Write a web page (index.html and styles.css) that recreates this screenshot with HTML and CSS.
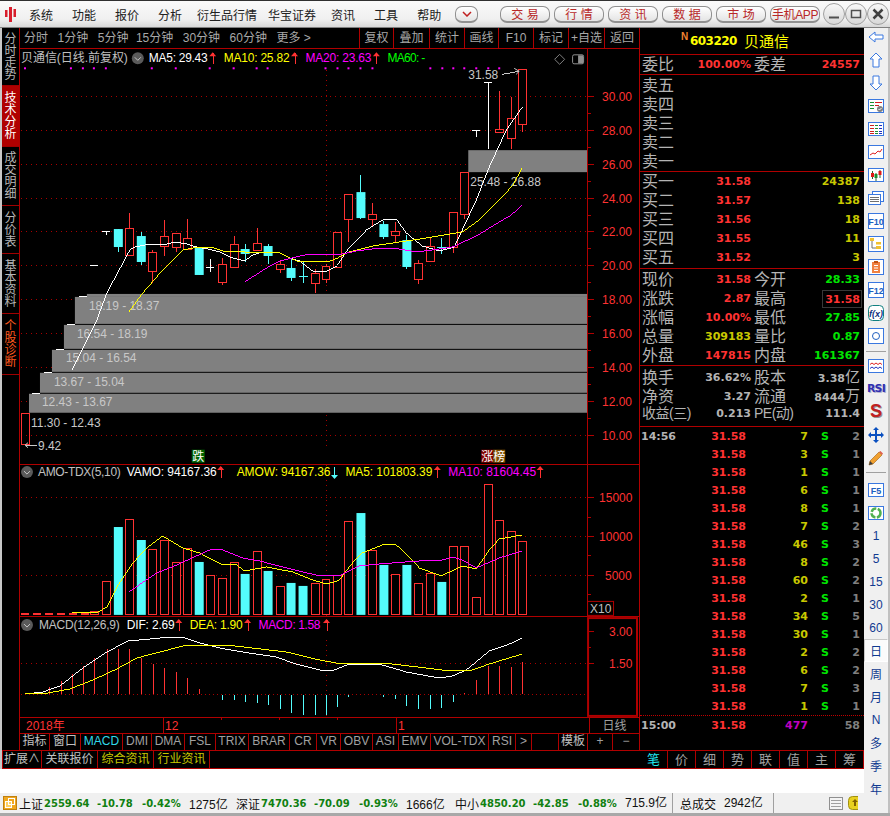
FILE: index.html
```html
<!DOCTYPE html>
<html lang="zh">
<head>
    <meta charset="UTF-8">
    <title>贝通信 - 行情</title>
    <link rel="stylesheet" href="styles.css">
</head>
<body>
<div class="app">
    <header class="menubar">
        <svg class="logo" width="13" height="17" viewBox="0 0 13 17"><path d="M1 4h2.500v7H1zM5 1h3v15H5zM9.500 3H12v8H9.500z" fill="#d81e2c"/></svg>
        <nav class="menu">
            <span>系统</span><span>功能</span><span>报价</span><span>分析</span>
            <span class="menu-long">衍生品行情</span><span class="menu-long">华宝证券</span>
            <span>资讯</span><span>工具</span><span>帮助</span>
        </nav>
        <div class="top-btns">
            <button class="pill pill-small"><svg width="10" height="6" viewBox="0 0 10 6"><path d="M1 1l4 4 4-4" fill="none" stroke="#c02020" stroke-width="1.500"/></svg></button>
            <button class="pill pill-first">交 易</button>
            <button class="pill">行 情</button>
            <button class="pill">资 讯</button>
            <button class="pill">数 据</button>
            <button class="pill">市 场</button>
            <button class="pill pill-app">手机APP</button>
        </div>
        <div class="win-btns">
            <span class="win-btn"><svg width="12" height="12" viewBox="0 0 12 12"><path d="M1 9.500h10" stroke="#505050" stroke-width="2"/></svg></span>
            <span class="win-btn"><svg width="12" height="12" viewBox="0 0 12 12"><rect x="1.500" y="2.500" width="9" height="7" fill="none" stroke="#505050" stroke-width="1.500"/></svg></span>
            <span class="win-btn"><svg width="12" height="12" viewBox="0 0 12 12"><path d="M1.500 1.500l9 9M10.500 1.500l-9 9" stroke="#404040" stroke-width="2.500"/></svg></span>
        </div>
    </header>

    <div class="main">
        <div class="work">
            <div class="upper">
                <div class="left">
                    <div class="left-top">
                        <nav class="side">
                            <a class="side-item side-h58">分时走势</a>
                            <a class="side-item side-h61 side-active">技术分析</a>
                            <a class="side-item side-h59">成交明细</a>
                            <a class="side-item side-h48">分价表</a>
                            <a class="side-item side-h60">基本资料</a>
                            <a class="side-item side-h61 side-alert">个股诊断</a>
                        </nav>
                        <div class="center">
                            <div class="period-bar">
                                <div class="periods">
                                    <span>分时</span><span>1分钟</span><span>5分钟</span><span class="period-tight">15分钟</span><span>30分钟</span><span>60分钟</span><span>更多 &gt;</span>
                                </div>
                                <div class="period-tools">
                                    <span>复权</span><span>叠加</span><span>统计</span><span>画线</span><span>F10</span><span>标记</span><span>+自选</span><span>返回</span>
                                </div>
                            </div>
                            <svg id="kline" class="pane pane-kline" viewBox="20 49 620 416"></svg>
                            <svg id="vol" class="pane pane-vol" viewBox="20 465 620 152"></svg>
                            <svg id="macd" class="pane pane-macd" viewBox="20 617 620 100"></svg>
                            <div class="date-row">
                                <span class="date-year">2018年</span>
                                <span class="date-dec">12</span>
                                <span>1</span>
                                <span class="date-unit">日线</span>
                            </div>
                            <div class="index-tabs">
                                <span class="tab-gray">指标</span><span class="tab-gray">窗口</span><span class="tab-on">MACD</span><span>DMI</span><span>DMA</span><span>FSL</span><span>TRIX</span><span>BRAR</span><span>CR</span><span>VR</span><span>OBV</span><span>ASI</span><span>EMV</span><span>VOL-TDX</span><span>RSI</span><span>&gt;</span><span></span><span class="tab-gray">模板</span><span>+</span><span>−</span>
                            </div>
                        </div>
                    </div>
                    <div class="info-tabs">
                        <span class="info-w39">扩展∧</span><span class="info-w56">关联报价</span><span class="info-w56 info-on">综合资讯</span><span class="info-w56 info-on">行业资讯</span>
                    </div>
                </div>

                <aside class="quote">
                    <div class="q-head">
                        <sup class="q-n">N</sup><b class="q-code">603220</b><span class="q-name">贝通信</span>
                    </div>
                    <div class="q-block q-rate">
                        <div class="q-row q-4"><span>委比</span><b class="red">100.00%</b><span>委差</span><b class="red">24557</b></div>
                    </div>
                    <div class="q-block q-pad-top">
                        <div class="q-row q-3"><span>卖五</span></div>
                        <div class="q-row q-3"><span>卖四</span></div>
                        <div class="q-row q-3"><span>卖三</span></div>
                        <div class="q-row q-3"><span>卖二</span></div>
                        <div class="q-row q-3"><span>卖一</span></div>
                    </div>
                    <div class="q-block q-pad-bottom">
                        <div class="q-row q-3"><span>买一</span><b class="red">31.58</b><b class="olive">24387</b></div>
                        <div class="q-row q-3"><span>买二</span><b class="red">31.57</b><b class="olive">138</b></div>
                        <div class="q-row q-3"><span>买三</span><b class="red">31.56</b><b class="olive">18</b></div>
                        <div class="q-row q-3"><span>买四</span><b class="red">31.55</b><b class="olive">11</b></div>
                        <div class="q-row q-3"><span>买五</span><b class="red">31.52</b><b class="olive">3</b></div>
                    </div>
                    <div class="q-block q-pad-top">
                        <div class="q-row q-4"><span>现价</span><b class="red">31.58</b><span>今开</span><b class="green">28.33</b></div>
                        <div class="q-row q-4"><span>涨跌</span><b class="red">2.87</b><span>最高</span><b class="red q-boxed">31.58</b></div>
                        <div class="q-row q-4"><span>涨幅</span><b class="red">10.00%</b><span>最低</span><b class="green">27.85</b></div>
                        <div class="q-row q-4"><span>总量</span><b class="olive">309183</b><span>量比</span><b class="green">0.87</b></div>
                        <div class="q-row q-4"><span>外盘</span><b class="red">147815</b><span>内盘</span><b class="green">161367</b></div>
                    </div>
                    <div class="q-block q-pad-bottom3">
                        <div class="q-row q-4"><span>换手</span><b class="gray">36.62%</b><span>股本</span><b class="gray">3.38<i>亿</i></b></div>
                        <div class="q-row q-4"><span>净资</span><b class="gray">3.27</b><span>流通</span><b class="gray">8444<i>万</i></b></div>
                        <div class="q-row q-4"><span class="q-wide">收益(三)</span><b class="gray">0.213</b><span class="q-wide">PE(动)</span><b class="gray">111.4</b></div>
                    </div>
                    <div id="ticks" class="ticks"></div>
                    <div class="tick-last">
                        <b class="gray">15:00</b><b class="red">31.58</b><b class="purple">477</b><span></span><b class="dim">58</b>
                    </div>
                    <div class="q-tabs">
                        <span class="q-tab-on">笔</span><span>价</span><span>细</span><span>势</span><span>联</span><span>值</span><span>主</span><span>筹</span>
                    </div>
                </aside>
            </div>
            <div class="blank"></div>
            <footer class="status">
                <svg class="status-icon" width="14" height="14" viewBox="0 0 14 14"><rect x=".5" y=".5" width="13" height="13" fill="#f0a820" stroke="#c08010"/><rect x="2.500" y="5.500" width="6" height="6" fill="#ffd060" stroke="#fff"/><rect x="5.500" y="2.500" width="6" height="6" fill="none" stroke="#fff"/></svg>
                <span class="idx-name">上证</span><b class="idx-val">2559.64</b><b class="idx-chg">-10.78</b><b class="idx-pct">-0.42%</b><span class="idx-amt">1275亿</span>
                <span class="idx-name">深证</span><b class="idx-val">7470.36</b><b class="idx-chg">-70.09</b><b class="idx-pct">-0.93%</b><span class="idx-amt idx-amt-wide">1666亿</span>
                <span class="idx-name">中小</span><b class="idx-val">4850.20</b><b class="idx-chg">-42.85</b><b class="idx-pct">-0.88%</b><span class="idx-amt idx-amt-last">715.9亿</span>
                <span class="total-name">总成交</span><span class="total-val">2942亿</span>
                <svg class="status-list" width="14" height="13" viewBox="0 0 14 13"><rect x=".5" y=".5" width="13" height="12" fill="#f4f4f4" stroke="#909090"/><path d="M2 3.500h10M2 6.500h10M2 9.500h10" stroke="#a0a0a0"/></svg>
                <svg class="status-coin" width="10" height="14" viewBox="0 0 10 14"><rect x=".5" y=".5" width="14" height="13" rx="4" fill="#e8d020" stroke="#a09010"/><path d="M7 3l3 3H8v4H6V6H4z" fill="#806000"/></svg>
            </footer>
        </div>

        <aside class="toolbar">
            <span class="tool"><svg viewBox="0 0 16 16"><path d="M1 8l6-5v3h8v4H7v3z" fill="#fff" stroke="#3a78e0"/></svg></span>
            <span class="tool"><svg viewBox="0 0 16 16"><path d="M8 1l6 6h-3v8H5V7H2z" fill="#fff" stroke="#3a78e0"/></svg></span>
            <span class="tool"><svg viewBox="0 0 16 16"><path d="M8 15l6-6h-3V1H5v8H2z" fill="#fff" stroke="#3a78e0"/></svg></span>
            <span class="tool"><svg viewBox="0 0 16 16"><rect x=".5" y="1.500" width="15" height="13" fill="#fff" stroke="#3a78e0"/><path d="M2 4.500h4M2 7.500h4M2 10.500h4" stroke="#1a9030"/><path d="M7 4.500h7M7 7.500h4" stroke="#d02020"/><circle cx="12" cy="11" r="3" fill="#808080"/><path d="M10.500 11l1 1 2-2" stroke="#fff" fill="none"/></svg></span>
            <span class="tool"><svg viewBox="0 0 16 16"><rect x=".5" y="1.500" width="15" height="13" fill="#fff" stroke="#3a78e0"/><path d="M2 4.500h4M2 7.500h4M2 10.500h4M2 12.500h4" stroke="#d02020"/><path d="M7 4.500h3M7 7.500h3M7 10.500h3M7 12.500h3" stroke="#1a9030"/><path d="M11 4.500h3M11 7.500h3M11 10.500h3M11 12.500h3" stroke="#2030c0"/></svg></span>
            <span class="tool"><svg viewBox="0 0 16 16"><rect x=".5" y="1.500" width="15" height="13" fill="#fff" stroke="#3a78e0"/><path d="M2 11l3-2 2 1 3-3 2 1 2-3" fill="none" stroke="#e02020"/></svg></span>
            <span class="tool"><svg viewBox="0 0 16 16"><rect x=".5" y="1.500" width="15" height="13" fill="#fff" stroke="#3a78e0"/><path d="M4.500 4v8M8 6v8M12 3v8" stroke="#306030"/><path d="M3 6h3v4H3zM10.500 4h3v4h-3z" fill="#e01818"/><path d="M6.500 7h3v4h-3z" fill="#1a9030"/></svg></span>
            <span class="tool"><svg viewBox="0 0 16 16"><rect x="4.500" y="1.500" width="11" height="10" fill="#fff" stroke="#3a78e0"/><rect x=".5" y="4.500" width="12" height="10" fill="#fff" stroke="#3a78e0"/><path d="M2 7.500h9M2 9.500h9M2 11.500h9" stroke="#707070"/></svg></span>
            <span class="tool"><svg viewBox="0 0 16 16"><rect x=".5" y=".5" width="15" height="15" fill="#fff" stroke="#3a78e0"/><text class="tool-text" x="8" y="12" text-anchor="middle">F10</text></svg></span>
            <span class="tool"><svg viewBox="0 0 16 16"><rect x=".5" y=".5" width="15" height="15" fill="#fff" stroke="#3a78e0"/><path d="M4 4v8h4" fill="none" stroke="#707070"/><path d="M2 2h4v3H2zM8 6h5v2.500H8zM8 10h5v3H8z" fill="#f0c030"/></svg></span>
            <span class="tool"><svg viewBox="0 0 16 16"><rect x=".5" y=".5" width="15" height="15" fill="#fff" stroke="#3a78e0"/><path d="M4 3h8v11H4z" fill="#f08040"/><path d="M6 2h4v2H6z" fill="#c05010"/><path d="M6 6.500h4M6 9h4M6 11.500h4" stroke="#fff"/></svg></span>
            <span class="tool"><svg viewBox="0 0 16 16"><rect x=".5" y=".5" width="15" height="15" fill="#fff" stroke="#3a78e0"/><text class="tool-text" x="8" y="12" text-anchor="middle">F12</text></svg></span>
            <span class="tool"><svg viewBox="0 0 16 16"><rect x=".5" y=".5" width="15" height="15" rx="4" fill="#fff" stroke="#108080"/><text class="tool-text tool-fx" x="8" y="12" text-anchor="middle">f(x)</text></svg></span>
            <span class="tool"><svg viewBox="0 0 16 16"><rect x=".5" y=".5" width="15" height="15" fill="#fff" stroke="#3a78e0"/><circle cx="8" cy="8" r="3.500" fill="none" stroke="#2060c0"/></svg></span>
            <span class="tool-sep tool-sep-a"></span>
            <span class="tool"><svg viewBox="0 0 16 16"><rect x=".5" y="1.500" width="15" height="13" fill="#fff" stroke="#3a78e0"/><path d="M2 6.500l2-1.500 2 1.500 2-1.500 2 1.500 2-1.500 2 1.500" fill="none" stroke="#e02020"/><path d="M2 10.500l2-1.500 2 1.500 2-1.500 2 1.500 2-1.500 2 1.500" fill="none" stroke="#2030c0"/></svg></span>
            <span class="tool tool-rsi">RSI</span>
            <span class="tool tool-s">S</span>
            <span class="tool"><svg viewBox="0 0 16 16"><path d="M8 0l3 3H9v4h4V5l3 3-3 3V9H9v4h2l-3 3-3-3h2V9H3v2L0 8l3-3v2h4V3H5z" fill="#0a50c0"/></svg></span>
            <span class="tool"><svg viewBox="0 0 16 16"><path d="M2 11L11 2l3 3-9 9-4 1z" fill="#f0a030" stroke="#a06010" stroke-width=".6"/><path d="M11 2l3 3 1-1.500L12.500 1z" fill="#e06050"/><path d="M1 15l1-4 3 3z" fill="#404040"/></svg></span>
            <span class="tool-sep tool-sep-b"></span>
            <span class="tool"><svg viewBox="0 0 16 16"><rect x=".5" y="1.500" width="15" height="13" fill="#fff" stroke="#3a78e0"/><text class="tool-text" x="8" y="12" text-anchor="middle">F5</text></svg></span>
            <span class="tool"><svg viewBox="0 0 16 16"><rect x=".5" y="1.500" width="15" height="13" fill="#fff" stroke="#3a78e0"/><circle cx="8" cy="8" r="4.500" fill="none" stroke="#50b050" stroke-width="2.500" stroke-dasharray="6 1.500"/></svg></span>
            <span class="tool tool-num">1</span>
            <span class="tool tool-num">5</span>
            <span class="tool tool-num">15</span>
            <span class="tool tool-num">30</span>
            <span class="tool tool-num">60</span>
            <span class="tool tool-num tool-now">日</span>
            <span class="tool tool-num">周</span>
            <span class="tool tool-num">月</span>
            <span class="tool tool-num">N</span>
            <span class="tool tool-num">多</span>
            <span class="tool tool-num">季</span>
            <span class="tool tool-num">年</span>
        </aside>
    </div>
</div>
<script src="chart.js"></script>
</body>
</html>
```

FILE: styles.css
```css
* {
    box-sizing: border-box;
}
body {
    margin: 0;
    background: #000;
    font-family: "Liberation Sans", "Noto Sans CJK SC", sans-serif;
    font-size: 12px;
    color: #c0c0c0;
}
.app {
    width: 890px;
    height: 816px;
    overflow: hidden;
    background: #a8a8a8;
}
b, i {
    font-style: normal;
}

/* top menu */
.menubar {
    height: 28px;
    display: flex;
    align-items: center;
    border-top: 1px solid #303030;
    border-bottom: 1px solid #808080;
    background: linear-gradient(#fafafa, #f0f0f0 70%, #d8d8d8);
    color: #202020;
}
.logo {
    margin-left: 4px;
    flex: none;
}
.menu {
    display: flex;
    gap: 19px;
    margin-left: 12px;
    width: 426px;
    font-size: 12px;
}
.menu-long {
    margin: 0 -4px;
}
.top-btns {
    display: flex;
    gap: 4px;
}
.pill {
    width: 50px;
    height: 17px;
    padding: 0;
    display: flex;
    align-items: center;
    justify-content: center;
    border: 1px solid #909090;
    border-bottom-width: 2px;
    border-radius: 7px;
    background: linear-gradient(#ffffff, #e4e4e4);
    color: #b82828;
    font: 12px "Liberation Sans", "Noto Sans CJK SC", sans-serif;
}
.pill-small {
    width: 23px;
}
.pill-first {
    margin-left: 18px;
}
.pill-app {
    letter-spacing: -.4px;
}
.win-btns {
    display: flex;
    margin-left: 3px;
}
.win-btn {
    width: 22px;
    height: 22px;
    display: flex;
    align-items: center;
    justify-content: center;
    border: 1px solid #a0a0a0;
    border-radius: 50%;
    background: linear-gradient(#f8f8f8, #d8d8d8);
}

/* layout */
.main {
    display: flex;
    height: 785px;
}
.work {
    width: 864px;
    flex: none;
}
.upper {
    display: flex;
    height: 741px;
    padding-left: 2px;
    background: #c8c8c8;
}
.left {
    width: 638px;
    display: flex;
    flex-direction: column;
    background: #000;
}
.left-top {
    display: flex;
    height: 722px;
}
.blank {
    height: 24px;
    background: #fff;
}

/* left strip */
.side {
    width: 18px;
    background: #000;
    border-right: 1px solid #b00000;
    font-size: 12px;
    line-height: 12px;
}
.side-item {
    display: flex;
    align-items: center;
    justify-content: center;
    padding: 0 3px;
    border-bottom: 1px solid #a00000;
    color: #b8b8b8;
    text-align: center;
}
.side-h48 { height: 48px; }
.side-h58 { height: 58px; }
.side-h59 { height: 59px; }
.side-h60 { height: 60px; }
.side-h61 { height: 61px; }
.side-active {
    background: #b00000;
    color: #fff;
}
.side-alert {
    color: #ff5a1e;
}

/* centre */
.center {
    width: 620px;
    border-right: 1px solid #b00000;
}
.period-bar {
    height: 21px;
    display: flex;
    justify-content: space-between;
    border-bottom: 1px solid #b00000;
}
.periods {
    display: flex;
    gap: 9.500px;
    padding-left: 4px;
    line-height: 20px;
    color: #a8a8a8;
}
.period-tight {
    margin-left: -2px;
}
.period-tools {
    display: grid;
    grid-template-columns: 34px 36px 35px 34px 35px 35px 36px 35px;
    line-height: 20px;
    text-align: center;
    color: #a8a8a8;
}
.period-tools span {
    border-left: 1px solid #b00000;
}
.pane {
    display: block;
    width: 619px;
    border: 0;
}
.pane-kline { height: 416px; }
.pane-vol { height: 152px; }
.pane-macd { height: 100px; }
.pane text {
    font-family: "Liberation Sans", "Noto Sans CJK SC", sans-serif;
    font-size: 12px;
}
.date-row {
    height: 17px;
    display: grid;
    grid-template-columns: 143px 233px 193px 1fr;
    border-top: 1px solid #b00000;
    border-bottom: 1px solid #b00000;
    color: #ff3232;
    line-height: 16px;
}
.date-row span {
    padding-left: 1px;
    border-left: 1px solid #b00000;
}
.date-row .date-year {
    padding-left: 6px;
    border-left: 0;
}
.date-row .date-dec {
    /* month ticks under the macd pane */
    background:
        linear-gradient(#b00000, #b00000) 57px 0 / 1px 2px no-repeat,
        linear-gradient(#b00000, #b00000) 115px 0 / 1px 2px no-repeat,
        linear-gradient(#b00000, #b00000) 173px 0 / 1px 2px no-repeat;
}
.date-row .date-unit {
    padding-left: 0;
    color: #a0a0a0;
    font-size: 12px;
    text-align: center;
}
.index-tabs {
    height: 16px;
    display: grid;
    grid-template-columns: 30px 31px 42px 29px 33px 31px 33px 41px 27px 24px 32px 26px 32px 58px 27px 16px 27px 29px 25px 1fr;
    line-height: 15px;
    text-align: center;
    color: #a0a0a0;
}
.index-tabs span {
    border-right: 1px solid #b00000;
}
.index-tabs span:last-child {
    border-right: 0;
}
.index-tabs .tab-gray {
    color: #c0c0c0;
}
.index-tabs .tab-on {
    color: #30d8e8;
}
.info-tabs {
    height: 19px;
    display: flex;
    background: #000;
    border-top: 1px solid #b00000;
    border-bottom: 1px solid #b00000;
    line-height: 16px;
    text-align: center;
}
.info-tabs span {
    border-right: 1px solid #b00000;
}
.info-w39 { width: 40px; border-left: 1px solid #b00000; }
.info-w56 { width: 56px; }
.info-tabs .info-on {
    color: #c8c800;
}

/* quote panel */
.quote {
    width: 224px;
    background: #000;
    font-size: 16px;
    color: #b4b4b4;
}
.quote b {
    font-family: "DejaVu Sans", sans-serif;
    font-size: 11px;
    font-weight: bold;
    text-align: right;
}
.red { color: #ff3232; }
.olive { color: #c8c800; }
.green { color: #00e600; }
.gray { color: #b4b4b4; }
.purple { color: #c000c0; }
.dim { color: #808080; }
.q-head {
    height: 27px;
    padding-left: 41px;
    border-bottom: 1px solid #b00000;
    display: flex;
    align-items: center;
    line-height: 1;
}
.q-n {
    width: 9px;
    margin-top: -9px;
    color: #f08030;
    font-size: 10px;
    font-weight: bold;
    font-family: "Liberation Sans", sans-serif;
}
.quote .q-code {
    color: #ffff00;
    font-size: 12px;
    width: 54px;
    text-align: left;
    letter-spacing: -.55px;
}
.q-name {
    color: #ffff00;
    font-size: 15px;
}
.q-block {
    border-bottom: 1px solid #b00000;
}
.q-rate {
    height: 20px;
}
.q-pad-top {
    height: 97px;
    padding-top: 1px;
}
.q-pad-bottom {
    height: 97px;
}
.q-pad-bottom3 {
    height: 61px;
}
.q-row {
    height: 19px;
    padding: 0 4px 0 2px;
    display: grid;
    align-items: center;
    line-height: 19px;
}
.q-row span {
    white-space: nowrap;
}
.q-3 {
    grid-template-columns: 32px 77px 1fr;
}
.q-4 {
    grid-template-columns: 32px 77px 32px 1fr;
    column-gap: 0;
}
.q-4 span:nth-of-type(2) {
    margin-left: 3px;
}
.q-wide {
    width: 44px;
    font-size: 14px;
    letter-spacing: -.5px;
}
.q-row b i {
    font-family: "Noto Sans CJK SC", sans-serif;
    font-size: 15px;
    font-weight: normal;
}
.q-boxed {
    justify-self: end;
    padding: 1px 1px 0 2px;
    margin-right: -2px;
    line-height: 15px;
    border: 1px solid #383838;
}
.ticks {
    height: 289px;
    border-bottom: 1px dotted #c00000;
}
.tick-row, .tick-last {
    height: 18px;
    padding: 0 4px 0 1px;
    display: grid;
    grid-template-columns: 40px 65px 62px 1fr 20px;
    align-items: center;
}
.tick-last {
    height: 34px;
    padding-bottom: 16px;
}
.tick-s {
    padding-left: 13px;
}
.quote .tick-last b:first-child,
.quote .tick-row b:first-child {
    text-align: left;
}
.quote .tick-s {
    text-align: left;
    color: #00e600;
}
.q-tabs {
    height: 19px;
    display: grid;
    grid-template-columns: repeat(8, 28px);
    border-top: 1px solid #b00000;
    border-bottom: 1px solid #b00000;
    font-size: 13px;
    line-height: 17px;
    text-align: center;
    color: #a0a0a0;
}
.q-tabs span {
    border-right: 1px solid #b00000;
}
.q-tabs .q-tab-on {
    color: #20e8f0;
}

/* status bar */
.status {
    height: 20px;
    display: flex;
    align-items: center;
    overflow: hidden;
    background: #f0f0f0;
    color: #101010;
}
.status-icon {
    margin: 0 2px 0 3px;
    flex: none;
}
.idx-name {
    width: 25px;
    font-size: 12px;
}
.status b {
    color: #108010;
    font-family: "DejaVu Sans", sans-serif;
    font-size: 10px;
}
.idx-val { width: 53px; }
.idx-chg { width: 45px; }
.idx-pct { width: 47px; }
.idx-amt { width: 47px; }
.idx-amt-wide { width: 49px; }
.idx-amt-last {
    width: 48px;
    height: 20px;
    line-height: 20px;
    border-right: 1px solid #a0a0a0;
}
.total-name {
    width: 51px;
    padding-left: 7px;
    flex: none;
    white-space: nowrap;
}
.total-val {
    width: 50px;
    height: 20px;
    line-height: 20px;
    border-right: 1px solid #a0a0a0;
}
.status-list {
    margin-left: 55px;
    flex: none;
}
.status-coin {
    margin-left: 5px;
    flex: none;
}

/* right icon column */
.toolbar {
    width: 26px;
    height: 785px;
    padding-top: 0;
    display: flex;
    flex-direction: column;
    align-items: flex-start;
    border-right: 2px solid #c0c0c0;
    background: #f0f0f0;
}
.tool {
    width: 24px;
    height: 23px;
    flex: none;
    display: flex;
    align-items: center;
    justify-content: center;
}
.tool svg {
    width: 16px;
    height: 16px;
}
.toolbar .tool:first-child {
    margin-top: -3px;
}
.tool-sep {
    width: 20px;
    height: 1px;
    margin: 0 2px;
    flex: none;
    background: #a0a0a0;
}
.tool-sep-a {
    margin-top: 4px;
    margin-bottom: 2px;
}
.tool-sep-b {
    margin-top: 3px;
    margin-bottom: 5px;
}
.tool-text {
    font: bold 9px "Liberation Sans", sans-serif;
    fill: #2060c0;
}
.tool-fx {
    fill: #103080;
    font-style: italic;
}
.tool-rsi {
    font: bold 11px "DejaVu Sans", sans-serif;
    color: #3030b0;
    letter-spacing: -.8px;
    text-shadow: 1px 1px #b0b0d0;
}
.tool-s {
    font: bold 18px "Liberation Sans", sans-serif;
    color: #c02020;
    text-shadow: 1px 1px #909090;
}
.tool-num {
    color: #103a90;
    font-size: 12px;
}
.tool-now {
    background: #fbfbfb;
    border: 1px solid #c8c8c8;
    border-right-color: #fff;
    border-bottom-color: #fff;
}
```

FILE: chart.js
```js
var RED = '#ff3232', CYAN = '#54fcfc', GRID = '#a80000', LINE = '#b00000', WHITE = '#ffffff';
var SVG_NS = 'http://www.w3.org/2000/svg';

function add(svg, tag, attrs, text) {
    var node = document.createElementNS(SVG_NS, tag);
    for (var key in attrs) {
        node.setAttribute(key, attrs[key]);
    }
    if (text !== undefined) {
        node.textContent = text;
    }
    svg.appendChild(node);
    return node;
}

function line(svg, x1, y1, x2, y2, color, dash) {
    var attrs = { x1: x1, y1: y1, x2: x2, y2: y2, stroke: color, 'shape-rendering': 'crispEdges' };
    if (dash) {
        attrs['stroke-dasharray'] = dash;
    }
    return add(svg, 'line', attrs);
}

function label(svg, x, y, str, color, width) {
    var attrs = { x: x, y: y, fill: color };
    if (width) {
        attrs.textLength = width;
        attrs.lengthAdjust = 'spacing';
    }
    return add(svg, 'text', attrs, str);
}

function curve(svg, points, color) {
    var flat = points.map(function (p) { return p[0] + ',' + p[1]; }).join(' ');
    add(svg, 'polyline', { points: flat, fill: 'none', stroke: color, 'shape-rendering': 'crispEdges' });
}

function arrow(svg, x, y, up, color) {
    line(svg, x + .5, y - 5, x + .5, y + 6, color);
    var tip = up ? y - 6 : y + 7;
    var base = up ? y - 2 : y + 3;
    add(svg, 'path', { d: 'M' + x + ' ' + tip + 'l3.500 ' + (base - tip) + 'h-7z', fill: color });
}

function circleBtn(svg, cx, cy) {
    add(svg, 'circle', { cx: cx, cy: cy, r: 6, fill: '#5a5a5a' });
    add(svg, 'path', { d: 'M' + (cx - 3) + ' ' + (cy - 1) + 'l3 3 3-3', fill: 'none', stroke: '#c8c8c8' });
}

function frame(svg, top, bottom) {
    line(svg, 588.5, top, 588.5, bottom, LINE);
}

/* ---------- price pane ---------- */
var kline = document.getElementById('kline');

// grid first, everything else sits on top of it
[96.5, 130.5, 164.5, 198.5, 231.5, 265.5, 299.5, 333.5, 367.5, 401.5, 435.5].forEach(function (y, i) {
    line(kline, 21, y, 588, y, GRID, '1 4');
    line(kline, 589, y, 595, y, LINE);
    label(kline, 603, y + 4.5, (30 - i * 2).toFixed(2), RED);
    if (y + 17 < 450) {
        line(kline, 589, y + 17, 592, y + 17, LINE);
    }
});
line(kline, 326.5, 70, 326.5, 450, GRID, '1 4');

// chip bands: [left, top, height]
[[87, 294, 3], [75, 297, 27], [64, 325, 24], [52, 350, 22], [40, 373, 20], [29, 394, 19], [469, 150, 22]].forEach(function (b) {
    add(kline, 'rect', { x: b[0], y: b[1], width: 588 - b[0], height: b[2], fill: '#808080' });
});
[[89, 310, '18.19 - 18.37'], [77, 338, '16.54 - 18.19'], [66, 362, '15.04 - 16.54'], [54, 386, '13.67 - 15.04'], [42, 406, '12.43 - 13.67'], [31, 427, '11.30 - 12.43'], [471, 186, '25.48 - 26.88']].forEach(function (t) {
    label(kline, t[0], t[1], t[2], '#c8c8c8');
});

// limit-up one-tick days
[[36, 393.5], [48, 372.5], [60, 349.5], [71, 324.5], [83, 296.5], [94, 265.5]].forEach(function (d) {
    line(kline, d[0] - 4, d[1], d[0] + 4, d[1], WHITE);
});

// candles: [x, high, bodyTop, bodyBottom, low, kind]
var candles = [
    [118, 229, 229, 247, 252, 'c'], [129, 213, 228, 255, 255, 'r'], [141, 232, 236, 262, 265, 'c'],
    [152, 250, 252, 271, 283, 'r'], [164, 220, 236, 246, 256, 'r'], [176, 233, 233, 247, 252, 'r'],
    [187, 219, 238, 249, 249, 'r'], [199, 248, 248, 275, 275, 'c'], [222, 258, 264, 282, 285, 'r'],
    [234, 236, 244, 267, 267, 'r'], [245, 244, 249, 254, 262, 'c'], [257, 228, 243, 250, 250, 'r'],
    [268, 244, 246, 256, 264, 'c'], [280, 260, 264, 269, 273, 'r'], [291, 259, 268, 278, 281, 'c'],
    [315, 269, 273, 283, 293, 'r'], [326, 264, 266, 279, 283, 'r'], [338, 232, 232, 267, 267, 'r'],
    [349, 194, 194, 219, 242, 'r'], [361, 175, 192, 218, 219, 'c'], [373, 203, 214, 219, 226, 'r'],
    [384, 221, 224, 237, 239, 'c'], [396, 222, 231, 235, 242, 'r'], [407, 235, 240, 267, 269, 'c'],
    [419, 260, 263, 279, 284, 'r'], [431, 237, 246, 261, 261, 'r'], [454, 212, 212, 247, 253, 'r'],
    [465, 172, 172, 214, 219, 'r'], [500, 91, 129, 132, 132, 'r'], [512, 97, 118, 138, 149, 'r'],
    [523, 69, 69, 124, 132, 'r']
];
candles.forEach(function (c) {
    var color = c[5] === 'r' ? RED : CYAN;
    line(kline, c[0] + .5, c[1], c[0] + .5, c[4], color);
    if (c[5] === 'r') {
        add(kline, 'rect', { x: c[0] - 3.5, y: c[2] + .5, width: 8, height: c[3] - c[2], fill: '#000', stroke: RED, 'shape-rendering': 'crispEdges' });
    } else {
        add(kline, 'rect', { x: c[0] - 4, y: c[2], width: 9, height: c[3] - c[2], fill: CYAN });
    }
});
add(kline, 'rect', { x: 21.5, y: 413.5, width: 8, height: 31, fill: 'none', stroke: RED, 'shape-rendering': 'crispEdges' });

// crosses and T shapes
line(kline, 106.5, 231.5, 106.5, 235, WHITE); line(kline, 102, 231.5, 110, 231.5, WHITE);
line(kline, 210.5, 259, 210.5, 272, WHITE); line(kline, 206, 267.5, 214, 267.5, WHITE);
line(kline, 303.5, 262, 303.5, 283, CYAN); line(kline, 299, 276.5, 308, 276.5, CYAN);
line(kline, 442.5, 238, 442.5, 254, CYAN); line(kline, 438, 247.5, 447, 247.5, CYAN);
line(kline, 477.5, 130, 477.5, 137, WHITE); line(kline, 473, 130.5, 481, 130.5, WHITE);
line(kline, 489.5, 82, 489.5, 149, WHITE); line(kline, 485, 82.5, 493, 82.5, WHITE);

curve(kline, [[72, 370], [77, 360], [97, 320], [107, 293], [130, 250], [135, 247], [150, 244], [163, 245], [175, 242], [187, 244], [197, 247], [208, 249], [220, 252], [230, 257], [245, 261], [253, 255], [263, 252], [280, 253], [290, 258], [300, 261], [313, 271], [325, 272], [338, 265], [348, 250], [367, 230], [383, 220], [397, 219], [407, 233], [423, 246], [440, 251], [455, 247], [463, 230], [477, 200], [490, 167], [507, 130], [523, 107]], WHITE);
curve(kline, [[129, 312], [143, 293], [163, 270], [183, 250], [193, 248], [212, 247], [223, 251], [240, 251], [250, 253], [260, 252], [280, 253], [290, 258], [300, 262], [327, 262], [340, 257], [350, 252], [373, 246], [400, 242], [427, 238], [463, 232], [480, 220], [493, 207], [513, 186], [523, 168]], '#ffff00');
curve(kline, [[245, 282], [267, 268], [280, 261], [300, 256], [310, 254], [343, 254], [357, 251], [380, 248], [400, 249], [417, 252], [433, 250], [453, 247], [477, 236], [500, 222], [512, 215], [523, 205]], '#ff00ff');

// the highest and lowest price notes
label(kline, 469, 79, '31.58', '#c8c8c8');
curve(kline, [[503, 74], [520, 71]], '#c8c8c8');
add(kline, 'path', { d: 'M515 68l5 3-3 3', fill: 'none', stroke: '#c8c8c8' });
label(kline, 38, 450, '9.42', '#c8c8c8');
line(kline, 26, 445.5, 37, 445.5, '#c8c8c8');
add(kline, 'path', { d: 'M28 443l-3 2.500 3 2.500', fill: 'none', stroke: '#c8c8c8' });

// legend
[25, 71, 83, 94, 106, 152, 176, 210, 234, 257, 268, 326, 338, 349, 361, 373, 431, 443, 454, 465, 477, 489, 500].forEach(function (x) {
    add(kline, 'rect', { x: x - 1, y: 67, width: 2, height: 2, fill: '#ff00ff' });
});
label(kline, 21, 62, '贝通信(日线.前复权)', '#c0c0c0', 107);
circleBtn(kline, 138, 58);
label(kline, 149, 62, 'MA5: 29.43', WHITE, 59);
arrow(kline, 213, 58, true, RED);
label(kline, 224, 62, 'MA10: 25.82', '#ffff00', 66);
arrow(kline, 295, 58, true, RED);
label(kline, 306, 62, 'MA20: 23.63', '#ff00ff', 66);
arrow(kline, 377, 58, true, RED);
label(kline, 388, 62, 'MA60: -', '#00ff00', 38);
add(kline, 'path', { d: 'M560.500 54l5 5-5 5-5-5z', fill: 'none', stroke: '#808080' });
add(kline, 'rect', { x: 573.5, y: 54.5, width: 11, height: 9, rx: 1.5, fill: 'none', stroke: '#909090' });
add(kline, 'rect', { x: 579, y: 55, width: 5, height: 8, fill: '#909090' });

// badges on the date line
add(kline, 'rect', { x: 192, y: 450, width: 13, height: 13, fill: '#006400' });
label(kline, 192.5, 461, '跌', WHITE);
add(kline, 'rect', { x: 482, y: 450, width: 12, height: 13, fill: '#800000' });
add(kline, 'rect', { x: 494, y: 450, width: 12, height: 13, fill: '#805000' });
label(kline, 482, 461, '涨榜', WHITE);
frame(kline, 49, 465);
line(kline, 20, 464.5, 640, 464.5, LINE);

/* ---------- amount pane ---------- */
var vol = document.getElementById('vol');

[[497.5, '15000', 600], [536.5, '10000', 600], [575.5, '5000', 606]].forEach(function (g) {
    line(vol, 21, g[0], 588, g[0], GRID, '1 4');
    line(vol, 589, g[0], 595, g[0], LINE);
    line(vol, 589, g[0] + 19.5, 592, g[0] + 19.5, LINE);
    label(vol, g[2], g[0] + 4.5, g[1], RED);
});
line(vol, 326.5, 465, 326.5, 616, GRID, '1 4');
line(vol, 21, 614, 90, 614, RED, '8 4').setAttribute('stroke-width', 2);

// [x, top, kind]
var bars = [
    [94, 611, 'r'], [106, 581, 'r'], [118, 527, 'c'], [129, 519, 'r'], [141, 540, 'c'], [152, 549, 'r'],
    [164, 540, 'r'], [176, 562, 'r'], [187, 548, 'r'], [199, 562, 'c'], [210, 575, 'r'], [222, 578, 'r'],
    [234, 562, 'r'], [245, 574, 'c'], [257, 551, 'r'], [268, 571, 'c'], [280, 586, 'r'], [291, 583, 'c'],
    [303, 586, 'c'], [315, 583, 'r'], [326, 579, 'r'], [338, 575, 'r'], [349, 521, 'r'], [361, 513, 'c'],
    [373, 550, 'r'], [384, 565, 'c'], [396, 574, 'r'], [407, 565, 'c'], [419, 583, 'r'], [431, 573, 'r'],
    [442, 582, 'c'], [454, 546, 'r'], [465, 546, 'r'], [477, 597, 'r'], [489, 484, 'r'], [500, 520, 'r'],
    [512, 531, 'r'], [523, 541, 'r']
];
bars.forEach(function (b) {
    if (b[2] === 'r') {
        add(vol, 'rect', { x: b[0] - 3.5, y: b[1] + .5, width: 8, height: 614 - b[1], fill: '#000', stroke: RED, 'shape-rendering': 'crispEdges' });
    } else {
        add(vol, 'rect', { x: b[0] - 4, y: b[1], width: 9, height: 615 - b[1], fill: CYAN });
    }
});
curve(vol, [[72, 613], [97, 613], [107, 607], [117, 587], [133, 563], [147, 548], [163, 536], [183, 548], [200, 553], [213, 560], [223, 565], [237, 565], [245, 571], [267, 567], [293, 572], [313, 580], [327, 584], [340, 580], [353, 563], [363, 553], [383, 545], [397, 545], [410, 557], [420, 568], [442, 576], [463, 566], [477, 569], [490, 550], [500, 539], [523, 535]], '#ffff00');
curve(vol, [[129, 592], [157, 573], [177, 565], [210, 550], [223, 550], [243, 558], [260, 561], [287, 568], [320, 576], [340, 576], [360, 566], [380, 564], [420, 561], [440, 561], [453, 557], [463, 560], [477, 568], [500, 558], [523, 551]], '#ff00ff');

circleBtn(vol, 27, 472);
label(vol, 38, 476, 'AMO-TDX(5,10)', '#c0c0c0', 83);
label(vol, 127, 476, 'VAMO: 94167.36', WHITE, 90);
arrow(vol, 221, 472, true, RED);
label(vol, 237, 476, 'AMOW: 94167.36', '#ffff00', 94);
arrow(vol, 335, 472, false, CYAN);
label(vol, 346, 476, 'MA5: 101803.39', '#ffff00', 87);
arrow(vol, 438, 472, true, RED);
label(vol, 449, 476, 'MA10: 81604.45', '#ff00ff', 88);
arrow(vol, 541, 472, true, RED);

frame(vol, 465, 616);
add(vol, 'rect', { x: 588.5, y: 601.5, width: 26, height: 14, fill: 'none', stroke: LINE });
label(vol, 591, 613, 'X10', '#c0c0c0');
line(vol, 20, 616.5, 640, 616.5, LINE);

/* ---------- MACD pane ---------- */
var macd = document.getElementById('macd');
line(macd, 21, 663.5, 588, 663.5, GRID, '1 4');
line(macd, 21, 694.5, 588, 694.5, GRID, '1 3');
line(macd, 326.5, 640, 326.5, 716, GRID, '1 4');

// [x, end of stick]
[[37, 692], [49, 687], [61, 681], [72, 674], [83, 666], [94, 658], [107, 649], [118, 649], [129, 649], [141, 658], [153, 664], [164, 668], [176, 672], [187, 678], [199, 689], [465, 693], [477, 680], [489, 666], [500, 666], [512, 667], [523, 662]].forEach(function (s) {
    line(macd, s[0] + .5, s[1], s[0] + .5, 694, RED);
});
[[210, 695], [222, 700], [234, 700], [245, 702], [257, 703], [268, 705], [280, 709], [291, 713], [303, 715], [315, 715], [326, 715], [338, 707], [349, 697], [384, 697], [396, 699], [407, 706], [419, 709], [431, 709], [442, 708], [454, 702]].forEach(function (s) {
    line(macd, s[0] + .5, 695, s[0] + .5, s[1], CYAN);
});
curve(macd, [[25, 694], [43, 692], [60, 686], [83, 668], [107, 652], [128, 641], [150, 639], [170, 637], [183, 637], [200, 643], [220, 648], [243, 652], [277, 657], [293, 663], [320, 670], [330, 671], [340, 668], [350, 664], [383, 665], [407, 672], [440, 678], [453, 676], [467, 670], [490, 651], [513, 643], [523, 638]], WHITE);
curve(macd, [[25, 694], [43, 694], [70, 689], [93, 680], [117, 669], [137, 658], [160, 652], [187, 645], [227, 645], [253, 648], [287, 652], [320, 660], [337, 663], [393, 664], [427, 668], [450, 671], [470, 671], [490, 664], [523, 654]], '#ffff00');

circleBtn(macd, 27, 625);
label(macd, 39, 629, 'MACD(12,26,9)', '#c0c0c0', 81);
label(macd, 127, 629, 'DIF: 2.69', WHITE, 48);
arrow(macd, 179, 625, true, RED);
label(macd, 190, 629, 'DEA: 1.90', '#ffff00', 53);
arrow(macd, 248, 625, true, RED);
label(macd, 259, 629, 'MACD: 1.58', '#ff00ff', 62);
arrow(macd, 327, 625, true, RED);

add(macd, 'rect', { x: 589, y: 618, width: 49, height: 98, fill: 'none', stroke: LINE, 'stroke-width': 2 });
line(macd, 589, 631.5, 595, 631.5, LINE);
line(macd, 589, 647.5, 592, 647.5, LINE);
line(macd, 589, 663.5, 595, 663.5, LINE);
label(macd, 610, 636, '3.00', RED);
label(macd, 610, 668, '1.50', RED);

/* ---------- tick list ---------- */
var tickVols = ['7', '3', '1', '6', '8', '7', '46', '8', '60', '2', '34', '30', '2', '6', '7', '1'];
var tickLast = ['2', '1', '1', '1', '1', '2', '3', '2', '2', '1', '5', '1', '2', '2', '3', '1'];
var ticks = document.getElementById('ticks');
tickVols.forEach(function (v, i) {
    var row = document.createElement('div');
    row.className = 'tick-row';
    row.innerHTML = '<b class="gray">' + (i === 0 ? '14:56' : '') + '</b><b class="red">31.58</b><b class="olive">' + v + '</b><b class="tick-s">S</b><b class="dim">' + tickLast[i] + '</b>';
    ticks.appendChild(row);
});
```
